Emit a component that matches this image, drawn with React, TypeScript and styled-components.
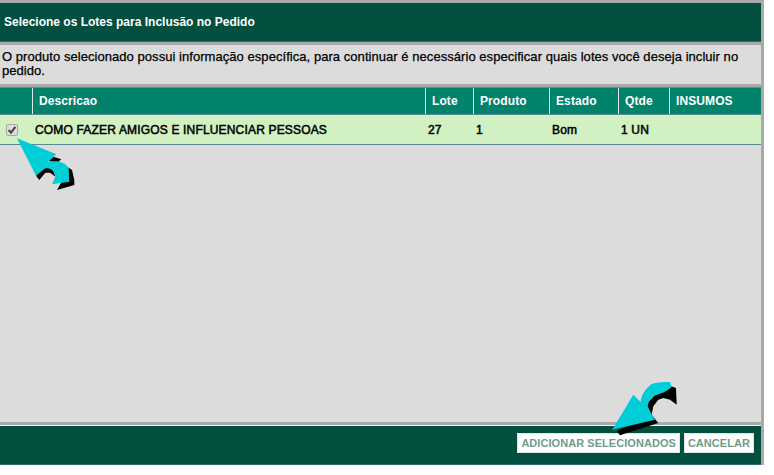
import React from 'react';
import styled, { createGlobalStyle } from 'styled-components';

const GlobalStyle = createGlobalStyle`
  html, body {
    margin: 0;
    padding: 0;
    background: #fff;
    font-family: "Liberation Sans", Arial, sans-serif;
  }
`;

const Dialog = styled.div`
  position: relative;
  width: 764px;
  height: 465px;
  box-sizing: border-box;
  display: flex;
  flex-direction: column;
  background: #dcdcdc;
  border-top: 3px solid #a9a9a9;
  border-right: 3px solid #a9a9a9;
`;

const TitleBar = styled.div`
  height: 39px;
  flex: none;
  display: flex;
  align-items: center;
  padding-left: 4px;
  background: #004f3f;
  border-bottom: 1px solid #2f6b62;
  box-sizing: border-box;
  color: #fff;
  font-size: 12px;
  font-weight: bold;
`;

const Message = styled.p`
  flex: none;
  height: 45px;
  box-sizing: border-box;
  margin: 0;
  padding: 5px 2px 0;
  border-top: 3px solid #a9a9a9;
  border-bottom: 3px solid #a9a9a9;
  color: #000;
  font-size: 13px;
  line-height: 14px;
  letter-spacing: 0.05px;
  -webkit-text-stroke: 0.25px #000;
`;

const Grid = styled.div`
  display: grid;
  grid-template-columns: 32px 393px 48px 76px 69px 51px 92px;
`;

const HeadRow = styled(Grid)`
  height: 28px;
  box-sizing: border-box;
  background: #00826b;
  border-top: 1px solid #5d8a94;
  border-bottom: 1px solid #5d8a94;
`;

const HeadCell = styled.div<{ $first?: boolean }>`
  display: flex;
  align-items: center;
  padding-left: 6px;
  border-left: ${(p) => (p.$first ? 'none' : '1px solid #dfe8e6')};
  color: #fff;
  font-size: 12px;
  font-weight: bold;
  letter-spacing: ${(p) => (p.$first ? '0' : '0.1px')};
`;

const BodyRow = styled(Grid)`
  height: 30px;
  box-sizing: border-box;
  background: #d1f1c2;
  border-bottom: 1px solid #5d8a94;
`;

const BodyCell = styled.div`
  display: flex;
  align-items: center;
  padding-left: 3px;
  color: #000;
  font-size: 12px;
  letter-spacing: 0.17px;
  -webkit-text-stroke: 0.5px #000;
`;

const CheckCell = styled.div`
  display: flex;
  align-items: center;
  padding-left: 6px;
`;

const CheckBox = styled.span`
  width: 12px;
  height: 12px;
  box-sizing: border-box;
  display: flex;
  align-items: center;
  justify-content: center;
  background: #dedede;
  border: 1px solid #a8a8a8;
  border-radius: 2px;
`;

const Spacer = styled.div`
  flex: 1;
`;

const FooterRule = styled.div`
  flex: none;
  height: 3px;
  background: #a9a9a9;
  border-bottom: 1px solid #f2f2f2;
`;

const Footer = styled.div`
  flex: none;
  height: 39px;
  box-sizing: border-box;
  display: flex;
  justify-content: flex-end;
  align-items: flex-start;
  gap: 4px;
  padding: 7px 7px 0 0;
  background: #004f3f;
  border-bottom: 1px solid #2f6b7a;
`;

const FooterButton = styled.button`
  height: 20px;
  box-sizing: border-box;
  padding: 0 3px;
  background: #fff;
  border: 1px solid #dfe8e4;
  color: #6f9c8c;
  font-family: inherit;
  font-size: 11px;
  font-weight: bold;
  letter-spacing: 0.05px;
  white-space: nowrap;
`;

const Arrow = styled.svg<{ $left: number; $top: number }>`
  position: absolute;
  left: ${(p) => p.$left}px;
  top: ${(p) => p.$top}px;
`;

const columns = ['Descricao', 'Lote', 'Produto', 'Estado', 'Qtde', 'INSUMOS'];

export default function App() {
  return (
    <>
      <GlobalStyle />
      <Dialog>
        <TitleBar>Selecione os Lotes para Inclusão no Pedido</TitleBar>
        <Message>
          O produto selecionado possui informação específica, para continuar é necessário especificar quais lotes
          você deseja incluir no pedido.
        </Message>
        <HeadRow>
          <HeadCell $first />
          {columns.map((c) => (
            <HeadCell key={c}>{c}</HeadCell>
          ))}
        </HeadRow>
        <BodyRow>
          <CheckCell>
            <CheckBox>
              <svg width="10" height="10" viewBox="0 0 10 10">
                <path d="M1.6 5 L4 7.6 L8.4 1.8" fill="none" stroke="#444" strokeWidth="2" />
              </svg>
            </CheckBox>
          </CheckCell>
          <BodyCell>COMO FAZER AMIGOS E INFLUENCIAR PESSOAS</BodyCell>
          <BodyCell>27</BodyCell>
          <BodyCell>1</BodyCell>
          <BodyCell>Bom</BodyCell>
          <BodyCell>1 UN</BodyCell>
          <BodyCell />
        </BodyRow>
        <Spacer />
        <FooterRule />
        <Footer>
          <FooterButton>ADICIONAR SELECIONADOS</FooterButton>
          <FooterButton>CANCELAR</FooterButton>
        </Footer>

        {/* arrows drawn on top, viewBox uses page coordinates */}
        <Arrow $left={10} $top={127} width="70" height="65" viewBox="10 130 70 65">
          <path d="M48.7 161 L53.7 156.7 L61.3 159.3 L57 163 Z" fill="#000" />
          <path d="M66 166 L72 170 L74.3 180 L74.3 185 L57 190 L60.3 184 L66 178 Z" fill="#000" />
          <path d="M36 175.7 L42 168 L52 166 L55.3 176.7 L50.3 172.7 L45.3 172.7 L39.3 180 Z" fill="#000" />
          <path
            d="M17 138.3 L56.3 154.3 L47.7 161.7 C54 161 59 161 62 162.7 C66 164 67 166 68.7 168.3 L69.3 181.7 L52 184.3 L55.3 176.7 C54 172 53 171 52 170 C50 168 47 168 45.3 168.3 L36 175.7 Z"
            fill="#00cdd6"
          />
        </Arrow>
        <Arrow $left={610} $top={377} width="70" height="62" viewBox="610 380 70 62">
          <path
            d="M660 390 L670.7 386 L676 388 L676.7 404.7 L670 399.7 L663.3 398 L658.3 399.7 L653.3 406.3 L651.7 414.7 L658.3 423 L620 435.3 L616.7 431.3 L640 420 L645 405 Z"
            fill="#000"
          />
          <path
            d="M612.3 429.7 L633.3 394.7 L640.7 402 C641 396 644 390 651.7 384 C658 382 665 382 670 382 L671.7 387.3 C668 390 664 393 661.7 393 L653.3 396.3 C650 399 648 403 647.7 406.3 L650 411.3 L655 419.7 Z"
            fill="#00cdd6"
          />
        </Arrow>
      </Dialog>
    </>
  );
}
